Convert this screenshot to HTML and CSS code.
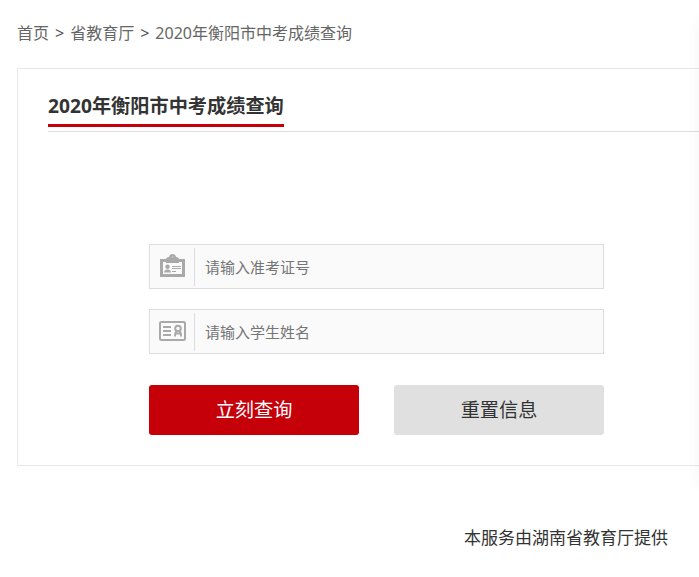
FILE: index.html
```
<!DOCTYPE html>
<html lang="zh-CN">
<head>
  <meta charset="UTF-8">
  <meta name="viewport" content="width=device-width, initial-scale=1.0">
  <title>2020年衡阳市中考成绩查询</title>
  <link rel="stylesheet" href="styles.css">
</head>
<body>
  <div class="container">
    <!-- Breadcrumb -->
    <div class="crumbs">
      <a href="#">首页</a><span>&gt;</span><a href="#">省教育厅</a><span>&gt;</span><a href="#">2020年衡阳市中考成绩查询</a>
    </div>

    <!-- Query form -->
    <div class="panel">
      <div class="panel-title">
        <h1>2020年衡阳市中考成绩查询</h1>
      </div>
      <form class="query-form">
        <div class="field">
          <svg class="icon" width="27" height="23" viewBox="0 0 27 23">
            <path d="M1 5h6v3H4v12h19V8h-3V5h6v18H1z" fill="#a9a9a9"/>
            <path d="M7 9V5.500Q7 3 10 3Q10.500 0 13.500 0Q16.500 0 17 3Q20 3 20 5.500V9z" fill="#a9a9a9"/>
            <circle cx="13.500" cy="3" r=".8" fill="#d0d0d0"/>
            <circle cx="8.500" cy="12.700" r="2.200" fill="#a9a9a9"/>
            <path d="M5 18.500q0-2.500 2.700-3h1.600q2.700.5 2.700 3z" fill="#a9a9a9"/>
            <path d="M13 12.500h9M13 14.500h9M13 17.500h4" stroke="#a9a9a9"/>
          </svg>
          <input type="text" id="ticketInput" placeholder="请输入准考证号">
        </div>
        <div class="field">
          <svg class="icon" width="27" height="20" viewBox="0 0 27 20" fill="none" stroke="#a9a9a9" stroke-width="2">
            <rect x="1" y="1" width="25" height="18" rx="1.500"/>
            <path d="M4 6h8M4 10h8M4 14h8"/>
            <circle cx="19" cy="7.500" r="2.800"/>
            <path d="M17.500 10Q16 11.500 16 15.500M20.500 10Q22 11.500 22 15.500M17 12.500h4"/>
          </svg>
          <input type="text" id="nameInput" placeholder="请输入学生姓名">
        </div>
        <div class="buttons">
          <button type="button" class="btn btn-submit">立刻查询</button>
          <button type="reset" class="btn btn-reset">重置信息</button>
        </div>
      </form>
    </div>

    <p class="provider">本服务由湖南省教育厅提供</p>
  </div>

  <!-- Side drawer, closed -->
  <div class="drawer"></div>
</body>
</html>
```
FILE: styles.css
```
* {
  box-sizing: border-box;
}

body {
  margin: 0;
  font-family: "Noto Sans", "Noto Sans CJK SC", sans-serif;
  font-size: 16px;
  color: #333;
  background-color: #fff;
  overflow: hidden;
}

.container {
  padding-left: 17px;
}

/* Breadcrumb */
.crumbs {
  height: 68px;
  line-height: 66px;
  white-space: nowrap;
}

.crumbs a {
  color: #666;
  text-decoration: none;
}

.crumbs span {
  margin: 0 6px;
  font-size: 16px;
  color: #555;
}

/* Panel */
.panel {
  height: 398px;
  padding-left: 30px;
  border: 1px solid #e8e8e8;
  border-right: none;
}

.panel-title {
  height: 63px;
  padding-top: 19px;
  border-bottom: 1px solid #ddd;
}

.panel-title h1 {
  display: inline-block;
  height: 39px;
  margin: 0;
  font-size: 19.2px;
  line-height: 35px;
  border-bottom: 3px solid #c50009;
}

/* Form */
.query-form {
  width: 455px;
  margin: 112px 0 0 101px;
}

.field {
  display: flex;
  align-items: center;
  height: 45px;
  margin-bottom: 20px;
  padding-left: 9px;
  background-color: #fafafa;
  border: 1px solid #ddd;
}

.icon {
  flex: none;
  width: 27px;
  margin-bottom: 2px;
}

.field input {
  flex: 1;
  height: 38px;
  margin-left: 8px;
  padding: 0 10px;
  font-family: inherit;
  font-size: 15px;
  color: #333;
  background: none;
  border: none;
  border-left: 1px solid #ddd;
  outline: none;
}

.field input::placeholder {
  color: #757575;
}

.buttons {
  display: flex;
  justify-content: space-between;
  margin-top: 31px;
}

.btn {
  width: 210px;
  height: 50px;
  padding: 0 0 2px;
  font-family: inherit;
  font-size: 19.2px;
  border: none;
  border-radius: 3px;
  cursor: pointer;
}

.btn-submit {
  color: #fff;
  background-color: #c50009;
}

.btn-reset {
  color: #333;
  background-color: #e0e0e0;
}

/* Footer note */
.provider {
  margin: 60px 31px 0 0;
  font-size: 17px;
  line-height: 24px;
  text-align: right;
}

/* Drawer parked outside the right edge, only its shadow shows */
.drawer {
  position: fixed;
  top: 20px;
  left: 100%;
  width: 100px;
  height: 465px;
  box-shadow: 0 0 14px rgba(0, 0, 0, 0.05);
}
```
